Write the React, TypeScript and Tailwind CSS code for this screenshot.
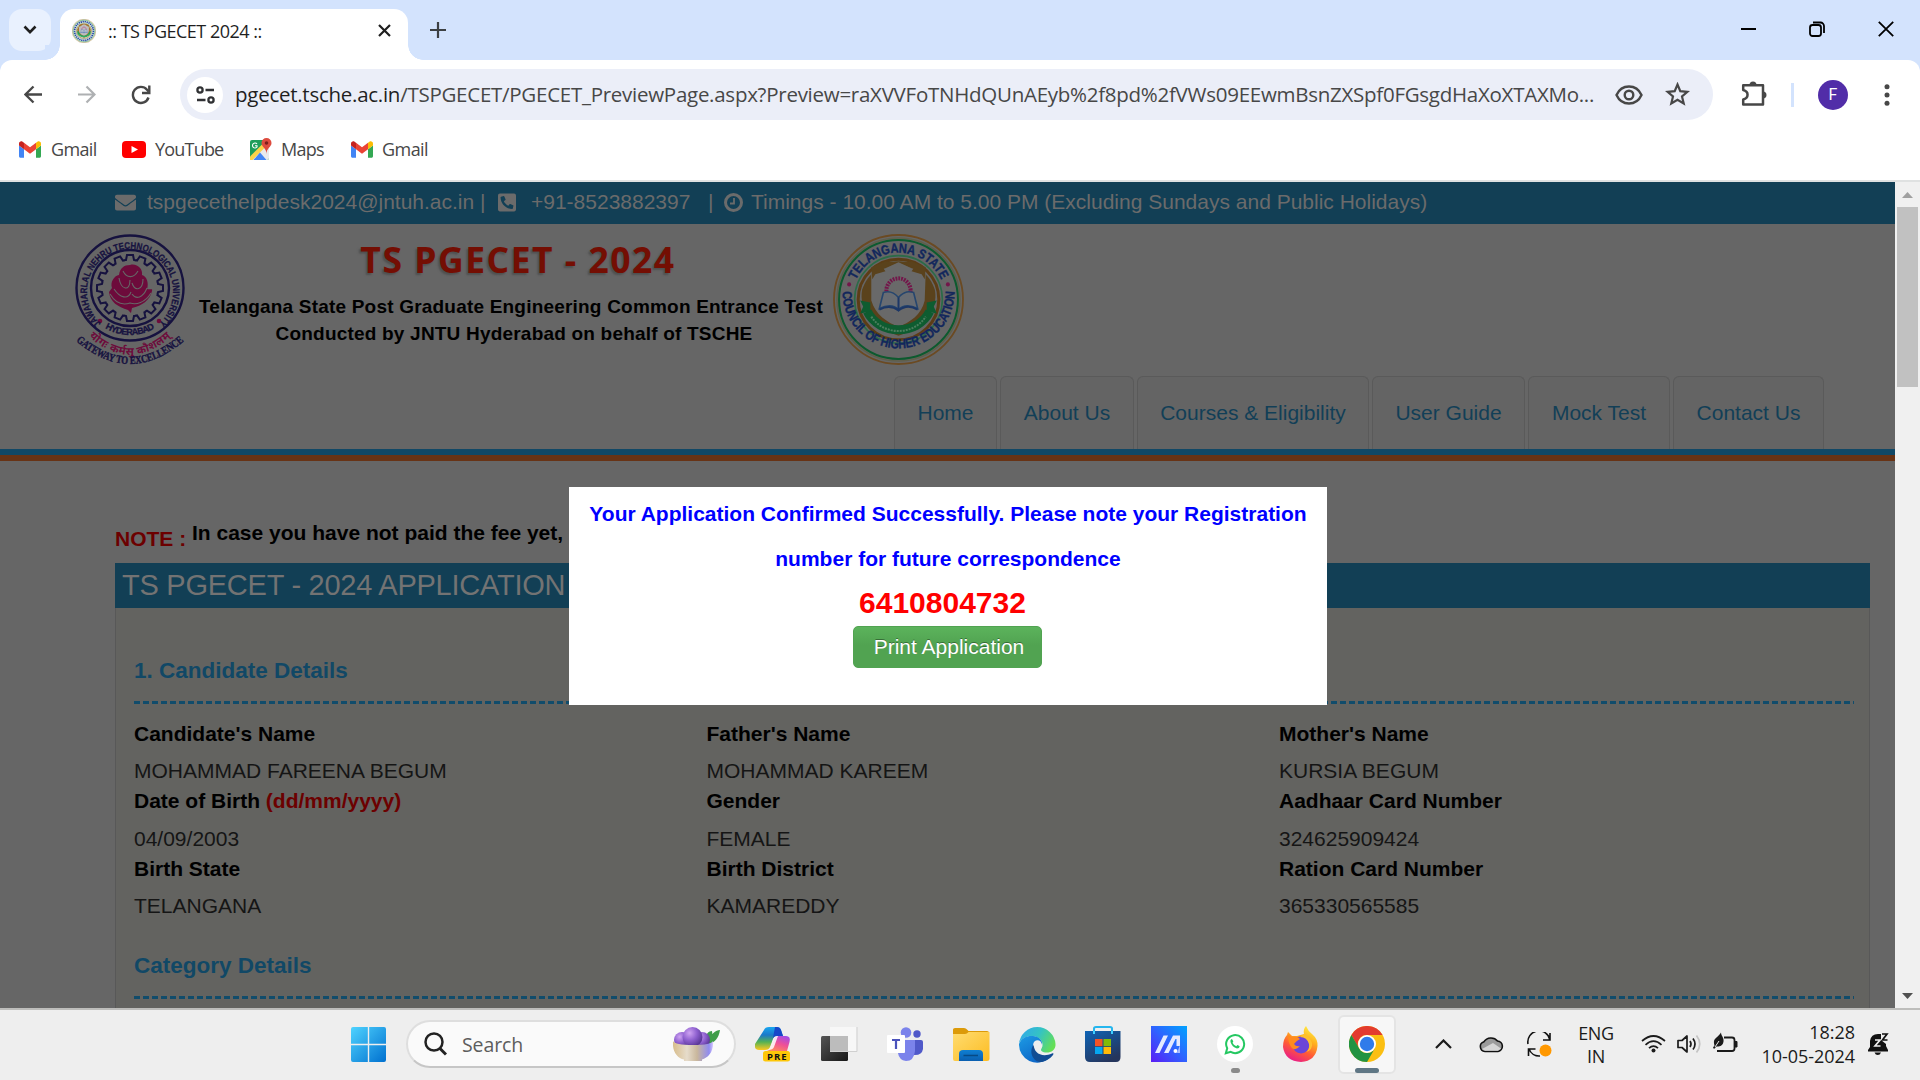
import React from "react";
import { FaEnvelope, FaPhoneSquare } from "react-icons/fa";

const ARIAL = "font-['Liberation_Sans',sans-serif]";
const SEGOE = "font-['Open_Sans','Noto_Sans',sans-serif]";

function CouncilSeal({ size, id }: { size: number; id: string }) {
  return (
    <svg width={size} height={size} viewBox="0 0 130 130" className="shrink-0">
      <defs>
        <path id={id + "t"} d="M 18.5 65 A 46.5 46.5 0 0 1 111.5 65" />
        <path id={id + "b"} d="M 9.5 58 A 55.5 55.5 0 1 0 120.5 58" />
      </defs>
      <circle cx="65" cy="65" r="64" fill="none" stroke="#6b4a22" strokeWidth="1.8" />
      <circle cx="65" cy="65" r="61" fill="none" stroke="#5f5f4a" strokeWidth="1.5" />
      <circle cx="65" cy="65" r="59" fill="none" stroke="#0d5a2e" strokeWidth="2" />
      <circle cx="65" cy="65" r="43.5" fill="none" stroke="#2b6b48" strokeWidth="1.6" />
      <circle cx="65" cy="65" r="40" fill="none" stroke="#5c3d16" strokeWidth="3" />
      <path d="M65 27 C48 28 34 40 29 55 C25 75 40 92 65 101 C90 92 105 75 101 55 C96 40 82 28 65 27Z" fill="#5a421c" />
      <path d="M65 28 L78 34 L92 38 L91 66 C88 80 76 88 65 92 C54 88 42 80 38 66 L38 38 L52 34Z" fill="#696969" />
      <path d="M66 28 L80 34 L78 37 L88 40 L91 45 L92 33 L78 27Z M64 28 L50 34 L52 37 L42 40 L39 45 L38 33 L52 27Z" fill="#5a421c" />
      <circle cx="65" cy="56" r="12" fill="none" stroke="#73164a" strokeWidth="4" strokeDasharray="1.8 1" />
      <path d="M65 63 C59 56 53 57 50 58 L46 74 C54 70 60 70 65 75 C70 70 76 70 84 74 L80 58 C76 57 71 56 65 63Z" fill="#686c72" stroke="#26466e" strokeWidth="1.6" />
      <path d="M65 63V75 M46 75C54 71 60 72 65 76 C70 72 77 71 84 75" fill="none" stroke="#1d3766" strokeWidth="2" />
      <path d="M34 77 C46 101 84 101 96 77" fill="none" stroke="#0e5c30" strokeWidth="9" />
      <path d="M38 82 C50 101 80 101 92 82" fill="none" stroke="#4b7d5d" strokeWidth="2" strokeDasharray="2 1" />
      <path d="M27 66 L37 68 L37 77 L27 79 L30 72Z M103 66 L93 68 L93 77 L103 79 L100 72Z" fill="#0e5c30" />
      <circle cx="16" cy="50" r="2" fill="#73164a" />
      <circle cx="114" cy="50" r="2" fill="#73164a" />
      {size > 60 && (
        <>
          <text className="font-['Liberation_Sans',sans-serif] text-[13px] font-bold" fill="#12275c" stroke="#12275c" strokeWidth="0.4">
            <textPath href={"#" + id + "t"} startOffset="50%" textAnchor="middle" textLength="106" lengthAdjust="spacingAndGlyphs">TELANGANA STATE</textPath>
          </text>
          <text className="font-['Liberation_Sans',sans-serif] text-[13px] font-bold" fill="#12275c" stroke="#12275c" strokeWidth="0.4">
            <textPath href={"#" + id + "b"} startOffset="50%" textAnchor="middle" textLength="176" lengthAdjust="spacingAndGlyphs">COUNCIL OF HIGHER EDUCATION</textPath>
          </text>
        </>
      )}
      {size <= 60 && <circle cx="65" cy="65" r="51" fill="none" stroke="#12275c" strokeWidth="9" strokeDasharray="7 4" />}
    </svg>
  );
}

function UniversitySeal() {
  const teeth = Array.from({ length: 16 }, (_, i) => i * 22.5);
  return (
    <svg width="112" height="134" viewBox="0 0 112 134" className="shrink-0">
      <defs>
        <path id="ju" d="M 30 92 A 43 43 0 1 1 82 92" />
        <path id="jb" d="M 20 85 A 48.5 48.5 0 0 0 92 85" />
        <path id="jh" d="M 9 97 Q 56 145 103 97" />
        <path id="jg" d="M 1 106 Q 56 154 111 106" />
      </defs>
      <ellipse cx="56" cy="54" rx="53.5" ry="52.5" fill="none" stroke="#16123f" strokeWidth="2.4" />
      <ellipse cx="56" cy="54" rx="39" ry="38" fill="none" stroke="#16123f" strokeWidth="2.4" />
      {teeth.map((a) => (
        <g key={a} transform={`rotate(${a} 56 54)`}>
          <path d="M50.5 26 L52 26 L53 21 H59 L60 26 L62 26.5" fill="none" stroke="#16123f" strokeWidth="2" />
        </g>
      ))}
      <path d="M56 31 C63 29 69 35 68 41 C73 42 75 50 73 55 C76 56 79 54 78 57 C76 66 68 72 58 74 L57 79 L54 76 C44 73 36 68 35 58 L38 54 C36 48 40 42 45 41 C46 34 50 31 56 31Z" fill="#6d0b3b" />
      <path d="M49 37 C53 45 60 44 64 37 M45 44 C47 56 56 58 56 46 M69 45 C69 56 61 58 58 49 M40 55 C46 64 54 66 57 58 M73 54 C69 64 62 66 58 60 M36 60 C42 70 50 71 56 69 C62 71 71 69 77 59" fill="none" stroke="#666" strokeWidth="1.1" />
      <circle cx="26" cy="87" r="2.3" fill="#6d0b3b" />
      <circle cx="85" cy="87" r="2.3" fill="#6d0b3b" />
      <text className="font-['Liberation_Sans',sans-serif] text-[9.500px] font-bold" fill="#16123f" stroke="#16123f" strokeWidth="0.3">
        <textPath href="#ju" startOffset="50%" textAnchor="middle" textLength="206" lengthAdjust="spacingAndGlyphs">JAWAHARLAL NEHRU TECHNOLOGICAL UNIVERSITY</textPath>
      </text>
      <text className="font-['Liberation_Sans',sans-serif] text-[9px] font-bold" fill="#16123f" stroke="#16123f" strokeWidth="0.3">
        <textPath href="#jb" startOffset="50%" textAnchor="middle" textLength="52">HYDERABAD</textPath>
      </text>
      <text className="font-['Noto_Sans_Devanagari','Noto_Sans',sans-serif] text-[11px] font-bold" fill="#6d0b3b">
        <textPath href="#jh" startOffset="50%" textAnchor="middle" textLength="92">योगः कर्मसु कौशलम्</textPath>
      </text>
      <text className="font-['Liberation_Serif',serif] text-[11px] font-bold" fill="#16123f" stroke="#16123f" strokeWidth="0.4">
        <textPath href="#jg" startOffset="50%" textAnchor="middle" textLength="120" lengthAdjust="spacingAndGlyphs">GATEWAY TO EXCELLENCE</textPath>
      </text>
    </svg>
  );
}

function Gmail() {
  return (
    <svg width="22" height="17" viewBox="0 0 88 66">
      <path fill="#4285f4" d="M6 66h14V32L0 17v43c0 3.3 2.7 6 6 6" />
      <path fill="#34a853" d="M68 66h14c3.300 0 6-2.700 6-6V17L68 32" />
      <path fill="#fbbc04" d="M68 6v26l20-15V9c0-7.400-8.500-11.600-14.400-7.200" />
      <path fill="#ea4335" d="M20 32V6l24 18L68 6v26L44 50" />
      <path fill="#c5221f" d="M0 9v8l20 15V6l-5.600-4.200C8.500-2.600 0 1.600 0 9" />
    </svg>
  );
}

function Tabs() {
  return (
    <div className="flex h-[60px] items-start bg-[#d3e3fd] pl-[9px]">
      <div className="mt-[9px] flex h-[42px] w-[42px] items-center justify-center rounded-[13px] bg-[#e9f1fe]">
        <svg width="14" height="10" viewBox="0 0 14 10" fill="none" stroke="#1f1f1f" strokeWidth="2.6"><path d="M1.500 1.500 7 7.200 12.500 1.500" /></svg>
      </div>
      <div className="relative mt-[9px] ml-[9px] flex h-[51px] w-[348px] items-center rounded-t-[14px] bg-white pr-[17px] pl-[12px]">
        <span className="absolute bottom-0 -left-[15px] h-[15px] w-[15px] bg-[radial-gradient(circle_at_0_0,#d3e3fd_14.500px,#fff_15px)]" />
        <span className="absolute -right-[15px] bottom-0 h-[15px] w-[15px] bg-[radial-gradient(circle_at_100%_0,#d3e3fd_14.500px,#fff_15px)]" />
        <div className="mb-[8px] rounded-full bg-[#e8ece4]"><div className="brightness-[1.8]"><CouncilSeal size={24} id="fav" /></div></div>
        <span className="mb-[6px] ml-[12px] flex-1 text-[18px] tracking-[-0.5px] whitespace-nowrap text-[#1f1f1f]">:: TS PGECET 2024 ::</span>
        <svg className="mb-[9px]" width="13" height="13" viewBox="0 0 13 13" stroke="#1f1f1f" strokeWidth="2.200"><path d="M1 1 12 12M12 1 1 12" /></svg>
      </div>
      <svg className="mt-[22px] ml-[22px]" width="16" height="16" viewBox="0 0 16 16" stroke="#3c4043" strokeWidth="2.200"><path d="M8 0V16M0 8H16" /></svg>
      <div className="ml-auto flex items-center pt-[21px] pr-[26px]">
        <span className="mr-[53px] h-[2px] w-[15px] bg-black" />
        <svg className="mr-[53px]" width="16" height="16" viewBox="0 0 16 16" fill="none" stroke="#000" strokeWidth="1.800"><rect x="1" y="4" width="11" height="11" rx="2.500" /><path d="M4 1.500H11.500A3.500 3.500 0 0 1 15 5V12" /></svg>
        <svg width="16" height="16" viewBox="0 0 16 16" stroke="#000" strokeWidth="1.800"><path d="M.8.8 15.200 15.200M15.200.8.800 15.200" /></svg>
      </div>
    </div>
  );
}

function Toolbar() {
  return (
    <div className="bg-[#d3e3fd]">
      <div className="flex h-[69px] items-center rounded-t-[12px] bg-white">
        <svg className="ml-[24px]" width="19" height="19" viewBox="0 0 19 19" fill="none" stroke="#474747" strokeWidth="2.300"><path d="M18 9.500H2M9.500 1.500 1.500 9.500 9.500 17.500" /></svg>
        <svg className="ml-[34px]" width="19" height="19" viewBox="0 0 19 19" fill="none" stroke="#aeb0b2" strokeWidth="2.200"><path d="M1 9.500H17M9.500 1.500 17.500 9.500 9.500 17.500" /></svg>
        <svg className="ml-[35px]" width="20" height="20" viewBox="0 0 20 20" fill="none" stroke="#474747" strokeWidth="2.400"><path d="M17.500 12.500A8 8 0 1 1 16 4.700L17.500 6.500" /><path d="M18.300.5V8H11" /></svg>
        <div className="ml-[29px] flex h-[51px] w-[1533px] items-center rounded-full bg-[#ebeef8] pl-[7px]">
          <div className="flex h-[36px] w-[36px] items-center justify-center rounded-full bg-white">
            <svg width="19" height="18" viewBox="0 0 19 18" fill="none" stroke="#303134" strokeWidth="2.300"><circle cx="4" cy="4" r="2.600" /><path d="M9.500 4H18M1 14H9.500" /><circle cx="15" cy="14" r="2.600" /></svg>
          </div>
          <span className="ml-[12px] w-[1361px] text-[20.500px] tracking-[-0.265px] whitespace-nowrap text-[#474747]">
            <span className="text-[#1f1f1f]">pgecet.tsche.ac.in</span>/TSPGECET/PGECET_PreviewPage.aspx?Preview=raXVVFoTNHdQUnAEyb%2f8pd%2fVWs09EEwmBsnZXSpf0FGsgdHaXoXTAXMo...
          </span>
          <svg className="ml-[19px]" width="28" height="20" viewBox="0 0 28 20" fill="none" stroke="#474747" strokeWidth="2.400"><path d="M1.500 10C4 4.500 8.500 1.500 14 1.500S24 4.500 26.500 10C24 15.500 19.500 18.500 14 18.500S4 15.500 1.500 10Z" /><circle cx="14" cy="10" r="4.300" /></svg>
          <svg className="mb-[1px] ml-[22px]" width="25" height="24" viewBox="0 0 25 24" fill="none" stroke="#474747" strokeWidth="2.200"><path d="M12.500 2.500 15.300 9.200 22.500 9.800 17 14.500 18.700 21.500 12.500 17.700 6.300 21.500 8 14.500 2.500 9.800 9.700 9.200Z" /></svg>
        </div>
        <svg className="mb-[2px] ml-[28px]" width="26" height="26" viewBox="0 0 26 26"><path d="M2.200 4.300H22V23.500H2.200V18.500C8 17 8 10.500 2.200 9Z" fill="none" stroke="#474747" strokeWidth="2.500" strokeLinejoin="round" /><path d="M8.500 4A3.500 3.500 0 0 1 15.500 4ZM22 10.500A3.500 3.500 0 0 1 22 17.500Z" fill="#474747" /></svg>
        <span className="ml-[24px] h-[24px] w-[3px] bg-[#d3e3fd]" />
        <span className="ml-[24px] flex h-[30px] w-[30px] items-center justify-center rounded-full bg-[#512da8] font-['Roboto',sans-serif] text-[16px] text-white">F</span>
        <svg className="ml-[36px]" width="6" height="22" viewBox="0 0 6 22" fill="#474747"><circle cx="3" cy="2.700" r="2.500" /><circle cx="3" cy="11" r="2.500" /><circle cx="3" cy="19.300" r="2.500" /></svg>
      </div>
      <div className="flex h-[53px] items-center border-b-2 border-[#dfe1e1] bg-white pb-[10px] pl-[19px] text-[18px] text-[#474747]">
        <Gmail /><span className="ml-[10px] w-[71px] tracking-[-0.65px]">Gmail</span>
        <svg width="24" height="17" viewBox="0 0 24 17"><rect width="24" height="17" rx="4" fill="#f00" /><path d="M9.500 5 16 8.500 9.500 12Z" fill="#fff" /></svg>
        <span className="ml-[9px] w-[95px] tracking-[-0.8px]">YouTube</span>
        <svg width="22" height="22" viewBox="0 0 22 22" className="mb-[2px]">
          <rect y="2" width="19" height="20" rx="2" fill="#1e9e5a" /><path d="M0 22 19 3V20Q19 22 17 22Z" fill="#e8eaed" /><path d="M0 18.500 14 4.500 17 7.500 2.500 22H0Z" fill="#fbd34b" /><path d="M3.500 22 10 14.500 16.500 22Z" fill="#4285f4" /><path d="M16.500 0a5 5 0 0 1 5 5c0 4-5 5-5 11 0-6-5-7-5-11a5 5 0 0 1 5-5" fill="#dd4b3e" /><circle cx="16.500" cy="5" r="1.800" fill="#7d1f1c" /><path d="M7 6A2.500 2.500 0 1 0 7 9V7.800H5" fill="none" stroke="#fff" strokeWidth="1.100" />
        </svg>
        <span className="ml-[9px] w-[70px] tracking-[-0.75px]">Maps</span>
        <Gmail /><span className="ml-[9px] tracking-[-0.55px]">Gmail</span>
      </div>
    </div>
  );
}

const NAV: [string, string][] = [
  ["Home", "w-[103px]"],
  ["About Us", "w-[134px]"],
  ["Courses & Eligibility", "w-[232px]"],
  ["User Guide", "w-[153px]"],
  ["Mock Test", "w-[142px]"],
  ["Contact Us", "w-[151px]"],
];

const ROWS: { label: string; hint?: string; value: string }[][] = [
  [
    { label: "Candidate's Name", value: "MOHAMMAD FAREENA BEGUM" },
    { label: "Father's Name", value: "MOHAMMAD KAREEM" },
    { label: "Mother's Name", value: "KURSIA BEGUM" },
  ],
  [
    { label: "Date of Birth", hint: "(dd/mm/yyyy)", value: "04/09/2003" },
    { label: "Gender", value: "FEMALE" },
    { label: "Aadhaar Card Number", value: "324625909424" },
  ],
  [
    { label: "Birth State", value: "TELANGANA" },
    { label: "Birth District", value: "KAMAREDDY" },
    { label: "Ration Card Number", value: "365330565585" },
  ],
];

function Dashes() {
  return <div className="h-[3px] w-[1720px] bg-[repeating-linear-gradient(90deg,#114c6b_0_6px,transparent_6px_9px)]" />;
}

function Site() {
  return (
    <div className={`relative h-[826px] w-[1895px] overflow-hidden bg-[#666] text-[21px] ${ARIAL}`}>
      <div className="flex h-[42px] items-center bg-[#123f55] pb-[2px] pl-[115px] leading-[40px] whitespace-pre text-[#6b6b6b]">
        <FaEnvelope className="h-[21px] w-[21px]" />
        <span className="ml-[11px] w-[351px]">tspgecethelpdesk2024@jntuh.ac.in |</span>
        <FaPhoneSquare className="h-[21px] w-[18px] -scale-x-100" />
        <span className="ml-[15px] w-[177px]">+91-8523882397</span>
        <span className="w-[16px]">|</span>
        <svg width="19" height="19" viewBox="0 0 19 19" fill="none" stroke="#6b6b6b"><circle cx="9.500" cy="9.500" r="8" strokeWidth="3" /><path d="M10 5V10.500H6" strokeWidth="1.800" /></svg>
        <span className="ml-[8px]">Timings - 10.00 AM to 5.00 PM (Excluding Sundays and Public Holidays)</span>
      </div>
      <div className="flex h-[152px] pt-[10px] pl-[74px]">
        <UniversitySeal />
        <div className="flex w-[647px] flex-col items-center font-bold text-black">
          <div className="mt-[4px] ml-[17px] font-['Open_Sans',sans-serif] text-[35.500px] leading-[42px] font-bold tracking-[1.500px] whitespace-nowrap text-[#740e03] [text-shadow:-2px_2px_2px_#505050]">TS PGECET - 2024</div>
          <div className="mt-[13px] ml-[3px] text-[19px] leading-[27px] tracking-[0.200px] whitespace-nowrap">Telangana State Post Graduate Engineering Common Entrance Test</div>
          <div className="ml-[9px] text-[19px] leading-[27px] tracking-[0.200px] whitespace-nowrap">Conducted by JNTU Hyderabad on behalf of TSCHE</div>
        </div>
        <div><CouncilSeal size={131} id="main" /></div>
      </div>
      <div className="flex h-[73px] gap-[3px] pl-[894px] text-[#123f57]">
        {NAV.map(([t, w]) => (
          <div key={t} className={`${w} rounded-t-[6px] border border-b-0 border-[#5a5a5a] bg-[#646464] text-center leading-[72px] whitespace-nowrap`}>{t}</div>
        ))}
      </div>
      <div className="h-[6px] bg-[#114866]" />
      <div className="h-[6px] bg-[#683315]" />
      <div className="flex h-[102px] items-start pt-[56px] pl-[115px] font-bold whitespace-nowrap">
        <span className="mt-[6px] w-[77px] text-[#6c0000]">NOTE :</span>
        <span className="text-black">In case you have not paid the fee yet,</span>
      </div>
      <div className="ml-[115px] h-[45px] w-[1755px] bg-[#123f55] pl-[7px] text-[29px] leading-[45px] tracking-[-0.250px] text-[#737373]">TS PGECET - 2024 APPLICATION</div>
      <div className="ml-[115px] h-[420px] w-[1755px] border-x border-[#585858] bg-[#636360] pl-[18px]">
        <div className="h-[93px] pt-[47px] text-[22.500px] leading-[32px] font-bold text-[#114866]">1. Candidate Details</div>
        <Dashes />
        <div className="h-[217px] pt-[15px]">
          {ROWS.map((row, i) => (
            <div key={i} className={`grid grid-cols-[572.500px_572.500px_1fr] ${i === 0 ? "h-[67px]" : "h-[68px]"}`}>
              {row.map((c) => (
                <div key={c.label}>
                  <div className={`leading-[30px] font-bold text-black ${i === 1 ? "h-[36px]" : "h-[35px]"}`}>
                    {c.label} {c.hint && <span className="text-[#6c0000]">{c.hint}</span>}
                  </div>
                  <div className="leading-[33px] text-[#151515]">{c.value}</div>
                </div>
              ))}
            </div>
          ))}
        </div>
        <div className="h-[75px] pt-[29px] text-[22.500px] leading-[32px] font-bold text-[#114866]">Category Details</div>
        <Dashes />
      </div>
      <div className="absolute top-[305px] left-[569px] flex h-[218px] w-[758px] flex-col items-center bg-white pt-[4px]">
        <p className="w-[730px] text-center leading-[45px] font-bold text-[#0000ff]">
          Your Application Confirmed Successfully. Please note your Registration<br />number for future correspondence
        </p>
        <div className="mr-[11px] h-[45px] text-[30px] leading-[44px] font-bold text-[#f00]">6410804732</div>
        <div className="mr-[2px] h-[42px] w-[189px] rounded-[5px] border border-[#51a351] bg-[linear-gradient(#5cb35c,#51a351_45%,#51a351)] pl-[4px] text-center leading-[40px] text-white [text-shadow:0_-1px_0_rgba(0,0,0,0.35)]">Print Application</div>
      </div>
    </div>
  );
}

function Scrollbar() {
  return (
    <div className="flex h-[826px] w-[25px] flex-col items-center bg-[#f0f0f0] pt-[10px] pb-[9px]">
      <svg width="11" height="6" viewBox="0 0 11 6" fill="#a0a0a0"><path d="M0 6 5.500 0 11 6Z" /></svg>
      <div className="mt-[9px] h-[180px] w-[21px] bg-[#c1c1c1]" />
      <svg className="mt-auto" width="11" height="6" viewBox="0 0 11 6" fill="#505050"><path d="M0 0 5.500 6 11 0Z" /></svg>
    </div>
  );
}

function Taskbar() {
  return (
    <div className="relative flex h-[72px] items-center border-t-2 border-[#bdbdbb] bg-[#eee] pb-[2px] pl-[351px] text-[#1b1b1b]">
      <svg width="35" height="35" viewBox="0 0 35 35">
        <defs><linearGradient id="wn" x1="0" y1="0" x2="1" y2="1"><stop stopColor="#4fd3ff" /><stop offset="1" stopColor="#0070cf" /></linearGradient></defs>
        <path d="M2 0H16.800V16.800H0V2Q0 0 2 0ZM18.200 0H33Q35 0 35 2V16.800H18.200ZM0 18.200H16.800V35H2Q0 35 0 33ZM18.200 18.200H35V33Q35 35 33 35H18.200Z" fill="url(#wn)" />
      </svg>
      <div className="ml-[20px] flex h-[48px] w-[330px] items-center rounded-full border-2 border-[#dedede] border-b-[#c6c6c6] bg-[#fafafa] pl-[16px]">
        <svg width="23" height="24" viewBox="0 0 23 24" fill="none" stroke="#222" strokeWidth="2.500"><circle cx="10" cy="10" r="8.500" /><path d="M15.500 16 22 22.500" strokeWidth="3" /></svg>
        <span className="mt-[2px] ml-[15px] w-[211px] text-[19.500px] tracking-[-0.1px] text-[#5d5d5d]">Search</span>
        <svg width="47" height="36" viewBox="0 0 47 36">
          <defs>
            <radialGradient id="acai" cx=".35" cy=".3" r=".75"><stop stopColor="#cfa3f2" /><stop offset=".5" stopColor="#8e60cf" /><stop offset="1" stopColor="#52318f" /></radialGradient>
            <linearGradient id="bowl"><stop stopColor="#d8bd8c" /><stop offset=".35" stopColor="#e6dccb" /><stop offset=".6" stopColor="#c9b79c" /><stop offset=".9" stopColor="#8f8bf0" /><stop offset="1" stopColor="#d9c8ff" /></linearGradient>
          </defs>
          <path d="M31 16C32 8 36 5 39 5 40 10 38 14 34 17ZM34 17C37 8 43 4 47 4 46 12 41 17 36 18Z" fill="#3f9d49" />
          <circle cx="9" cy="14" r="8" fill="url(#acai)" /><circle cx="29" cy="14" r="8" fill="url(#acai)" /><circle cx="19.500" cy="11" r="10" fill="url(#acai)" />
          <path d="M0 15Q2 19 20 19T40 15C41 26 35 32 29 33.500V35H11V33.500C4 32-1 25 0 15Z" fill="url(#bowl)" />
        </svg>
      </div>
      <svg className="ml-[19px]" width="36" height="36" viewBox="0 0 36 36">
        <defs>
          <linearGradient id="cp1" x2="0" y2="1"><stop stopColor="#18a6f0" /><stop offset=".35" stopColor="#1b78c9" /><stop offset=".65" stopColor="#53b254" /><stop offset="1" stopColor="#ffc91f" /></linearGradient>
          <linearGradient id="cp2" x1=".8" y1="0" x2=".3" y2="1"><stop stopColor="#a14be8" /><stop offset=".5" stopColor="#ef4f97" /><stop offset="1" stopColor="#ff8b5c" /></linearGradient>
        </defs>
        <path d="M9 4Q10 1 14 1H22Q25 1 26 4L28 10H22Q19 10 18 13L15 21Q14 24 10 24H4Q-1 24 0 18Z" fill="url(#cp1)" />
        <path d="M20 1H22Q25 1 26 4L28 10H22Q19 10 18 12Z" fill="#1647c9" />
        <path d="M27 10H31Q36 10 34.500 16L32 25H12Q15 24 16 21L19 13Q20 10 24 10Z" fill="url(#cp2)" />
        <path d="M18 14Q19 10 23 10L19 21Q18 24 13 24Q15 23 16 20Z" fill="#fff" opacity=".85" />
        <rect x="8" y="25" width="27" height="10.500" rx="2.500" fill="#fdc708" />
        <text x="12" y="33.500" textLength="19.500" className="font-['Open_Sans',sans-serif] text-[9.500px] font-bold" fill="#111">PRE</text>
      </svg>
      <svg className="ml-[30px]" width="37" height="36" viewBox="0 0 37 36">
        <defs><linearGradient id="tv" x2="1" y2="1"><stop stopColor="#555" /><stop offset="1" stopColor="#161616" /></linearGradient></defs>
        <rect y="10" width="27" height="25" rx="1.500" fill="url(#tv)" /><path d="M9 1H35.500V25H9Z" fill="#f7f7f7" /><path d="M9 10H27V25H9Z" fill="#bcbcbc" /><path d="M9 25.500H36V1" fill="none" stroke="#d0d0d0" />
      </svg>
      <svg className="ml-[29px]" width="36" height="36" viewBox="0 0 36 36">
        <circle cx="30" cy="8" r="3.700" fill="#5059c9" /><circle cx="19" cy="6.500" r="5.300" fill="#7b83eb" /><path d="M25 14H34Q36 14 36 16V23Q35 29 28 29H24Z" fill="#5059c9" /><path d="M12 14H28V25Q27 35 19 35 12 34 11 27Z" fill="#7b83eb" /><rect y="9" width="18" height="18" rx="1" fill="#fff" /><path d="M5 14H13M9 14V23" stroke="#4b53bc" strokeWidth="2.200" />
      </svg>
      <svg className="ml-[30px]" width="37" height="36" viewBox="0 0 37 36">
        <defs><linearGradient id="fd" x2="1" y2="1"><stop stopColor="#ffdc70" /><stop offset="1" stopColor="#fcbc22" /></linearGradient><linearGradient id="fb" x2="0" y2="1"><stop stopColor="#0f7fd2" /><stop offset="1" stopColor="#0a5fb0" /></linearGradient></defs>
        <path d="M0 3.500Q0 2 2 2H11Q13 2 14 3.500L15.500 5H34Q36 5 36 7V12H0Z" fill="#dc9a09" /><path d="M0 8H12Q14 8 15.500 6H36.500V33Q36.500 35 34 35H2Q0 35 0 33Z" fill="url(#fd)" /><path d="M6 35V28Q6 24 10 24H26Q30 24 30 28V35Z" fill="url(#fb)" /><path d="M10.500 29.500H25" stroke="#074a85" strokeWidth="1.500" />
      </svg>
      <svg className="ml-[29px]" width="37" height="37" viewBox="0 0 37 37">
        <defs><linearGradient id="eg" y1=".2" y2=".6"><stop stopColor="#31a9ea" /><stop offset=".5" stopColor="#34c3c4" /><stop offset="1" stopColor="#66df55" /></linearGradient><linearGradient id="eb" x2=".6" y2="1"><stop stopColor="#1d9be4" /><stop offset="1" stopColor="#0c65c6" /></linearGradient></defs>
        <path d="M0 18A18.300 18.300 0 0 1 36.500 18C37 24 32 26.500 28 26.500 23 26.500 21 24.500 22.500 22.500 26 17 21 10 13 10 6 10 1 14 0 18Z" fill="url(#eg)" />
        <path d="M0 18C2 12 8 9.500 14 10 20 10 24 15 23 19 21 14 15 14 14 20 13 28 20 35 30 32.500A18.300 18.300 0 0 1 0 18Z" fill="url(#eb)" />
        <path d="M15 18C9 25 14 37 23 36 29 34.500 33 31 34.500 28 34.500 27 34 27 33 27.500 23 32 14 27 15 18Z" fill="#124c93" />
        <circle cx="18.500" cy="18.500" r="4.200" fill="#eee" />
      </svg>
      <svg className="ml-[29px]" width="36" height="36" viewBox="0 0 36 36">
        <defs><linearGradient id="st" x2=".6" y2="1"><stop stopColor="#0e63b5" /><stop offset="1" stopColor="#25355c" /></linearGradient></defs>
        <path d="M9 8V2.500Q9 1 11 1H25Q27 1 27 2.500V8" fill="none" stroke="#25b6ee" strokeWidth="2" /><path d="M0 5H35.500V31Q35.500 36 31 36H5Q0 36 0 31Z" fill="url(#st)" /><path d="M9 5V8M27 5V8" stroke="#40d0ff" strokeWidth="2" /><path d="M10 13H17.500V20.200H10Z" fill="#f35325" /><path d="M18.500 13H26V20.200H18.500Z" fill="#81bc06" /><path d="M10 21H17.500V28H10Z" fill="#05a6f0" /><path d="M18.500 21H26V28H18.500Z" fill="#ffba08" />
      </svg>
      <svg className="ml-[30px]" width="36" height="36" viewBox="0 0 36 36">
        <defs><linearGradient id="my" x1="0" y1="1" x2="1" y2="0"><stop stopColor="#5b1cf5" /><stop offset=".5" stopColor="#2f62ff" /><stop offset="1" stopColor="#00a3ff" /></linearGradient></defs>
        <rect width="36" height="36" fill="url(#my)" /><path d="M4 27 12.500 9.500H17L8.500 27ZM13 27 22 9.500H29V20H25.500V13H24.500L17.500 27Z" fill="#e4eaff" /><circle cx="24.500" cy="25" r="2" fill="#fff" /><path d="M29 19V27H26Z" fill="#a9bbff" />
      </svg>
      <div className="relative ml-[30px] flex h-[36px] w-[36px] items-center justify-center rounded-full bg-white">
        <svg width="22" height="22" viewBox="0 0 22 22"><path d="M1.800 20.300 3.200 15.300A9 9 0 1 1 6.700 18.900Z" fill="none" stroke="#25c862" strokeWidth="2" /><path d="M7.500 6Q6 7 6.500 9 8 14 13 15.500 15.500 15.500 15.700 13.500 15.500 12.700 13.300 12L12.300 13.300Q9.500 12 8.500 9.800L9.300 8.700Q8.700 6 7.500 6" fill="#25c862" /></svg>
        <span className="absolute top-[42px] left-[14px] h-[5px] w-[9px] rounded-full bg-[#8a8a8a]" />
      </div>
      <svg className="ml-[30px]" width="35" height="36" viewBox="0 0 35 36">
        <defs><linearGradient id="ff" x1=".8" y1="0" x2=".3" y2="1"><stop stopColor="#fff04a" /><stop offset=".35" stopColor="#ffb01c" /><stop offset=".65" stopColor="#ff5b36" /><stop offset="1" stopColor="#e81a8c" /></linearGradient></defs>
        <path d="M21 8Q20 3 23 0 25 5 29 8 35 13 34.500 20 33 35 18 36 2 35 0 21 0 13 4 9L5 6 9 10 14 10Z" fill="url(#ff)" /><circle cx="18" cy="19" r="8.500" fill="#6b45d8" /><path d="M5 9 9 11Q15 10 17 13 13 15 11 18 13 21 17 20 12 26 8 21 5 16 5 9Z" fill="#ff8a1e" /><path d="M17 11Q24 11 26 18 27 23 23 26 30 24 29 17 27 11 21 8Z" fill="#ffc02e" />
      </svg>
      <div className="relative ml-[20px] flex h-[59px] w-[58px] items-center justify-center rounded-[6px] border-2 border-[#e4e4e4] bg-[#f7f7f7]">
        <svg width="36" height="36" viewBox="0 0 36 36">
          <circle cx="18" cy="18" r="18" fill="#fbbf12" /><path d="M2.400 9A18 18 0 0 1 33.600 9H18A9 9 0 0 0 10 22.500Z" fill="#e33b2e" /><path d="M2.400 9A18 18 0 0 0 18 36L25.800 22.500A9 9 0 0 1 10.200 22.500Z" fill="#229342" /><circle cx="18" cy="18" r="9" fill="#fff" /><circle cx="18" cy="18" r="7.200" fill="#2f7bea" />
        </svg>
        <span className="absolute bottom-[-1px] left-[15px] h-[5px] w-[24px] rounded-full bg-[#5f7684]" />
      </div>
      <svg className="ml-[39px]" width="17" height="10" viewBox="0 0 17 10" fill="none" stroke="#1b1b1b" strokeWidth="2.200"><path d="M1 9 8.500 1.500 16 9" /></svg>
      <svg className="ml-[27px]" width="25" height="18" viewBox="0 0 25 18"><path d="M6 16.500A5 5 0 0 1 5 6.700 8 7.300 0 0 1 18.500 6 5.300 5.300 0 0 1 19 16.500Z" fill="#9b9b9b" stroke="#111" strokeWidth="1.600" /><path d="M3 14 14 8 22 13.500 19 15.700H6Z" fill="#d5d5d5" /></svg>
      <svg className="ml-[23px]" width="25" height="25" viewBox="0 0 25 25" fill="none" stroke="#111" strokeWidth="1.600"><path d="M1 12A11 11 0 0 1 23 8M23 1V8H16M13 24A11 11 0 0 1 2 17M1.500 24V17H8.500" /><circle cx="18.500" cy="18.500" r="6" fill="#ff9800" stroke="none" /></svg>
      <div className="mt-[2px] ml-[25px] w-[38px] text-center text-[18px] leading-[23px] tracking-[-0.4px]">ENG<br />IN</div>
      <svg className="ml-[26px]" width="25" height="18" viewBox="0 0 25 18" fill="none" stroke="#1b1b1b" strokeWidth="1.700"><path d="M1 6Q12.500-4 24 6M4.500 9.800Q12.500 2.500 20.500 9.800M8 13.200Q12.500 9 17 13.200" /><circle cx="12.500" cy="15.500" r="2" fill="#1b1b1b" stroke="none" /></svg>
      <svg className="ml-[11px]" width="25" height="20" viewBox="0 0 25 20" fill="none" stroke="#1b1b1b" strokeWidth="1.700"><path d="M1 6.500H5L10 2V18L5 13.500H1Z" strokeLinejoin="round" /><path d="M13 7Q15 10 13 13M16 4.500Q20 10 16 15.500" /><path d="M19.500 1.500Q26 10 19.500 18.500" stroke="#c4c4c4" /></svg>
      <svg className="mb-[4px] ml-[11px]" width="26" height="21" viewBox="0 0 26 21"><path d="M11 5.500H19Q21.500 5.500 21.500 8V16.500Q21.500 19 19 19H4" fill="none" stroke="#1b1b1b" strokeWidth="1.800" /><path d="M22 9.500H24V15H22" fill="#1b1b1b" stroke="#1b1b1b" /><path d="M8 .5C8 4 11 5 10.500 9.500 10 14 6 15 3.500 14.500L1 17 0 15.500 1.500 13.500C-1 6 5 6 8 .5Z" fill="#1b1b1b" /><path d="M2 15 6 9" stroke="#eee" /></svg>
      <div className="ml-[18px] w-[98px] text-right text-[18px] leading-[24px] tracking-[-0.050px] whitespace-nowrap">18:28<br />10-05-2024</div>
      <svg className="ml-[13px]" width="22" height="24" viewBox="0 0 22 24" fill="#111"><path d="M2 15V9Q3 2 10 2H13V8L18 12V14L20 18V19.500H0V18ZM6.500 20.500H13Q12 23 9.800 23 7.500 23 6.500 20.500Z" /><path d="M14 2H19L14.500 8H19.500" fill="none" stroke="#111" strokeWidth="1.700" /><path d="M7 8H12L7 14H12.500" fill="none" stroke="#eee" strokeWidth="1.700" /></svg>
    </div>
  );
}

export default function App() {
  return (
    <div className={`h-[1080px] w-[1920px] overflow-hidden bg-white ${SEGOE}`}>
      <Tabs />
      <Toolbar />
      <div className="flex">
        <Site />
        <Scrollbar />
      </div>
      <Taskbar />
    </div>
  );
}
